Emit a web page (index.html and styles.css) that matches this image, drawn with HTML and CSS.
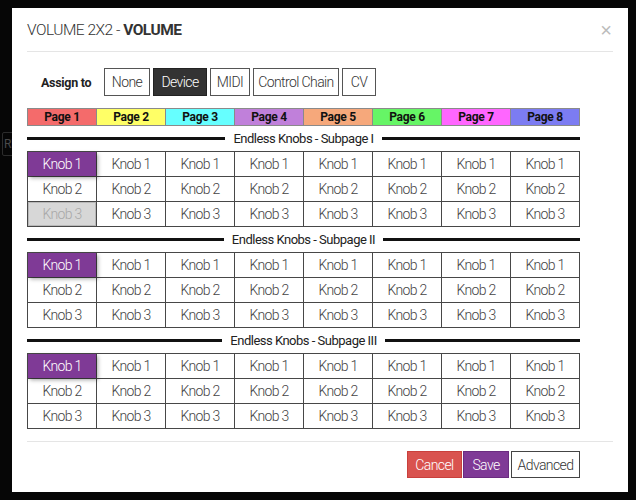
FILE: index.html
```html
<!DOCTYPE html>
<html lang="en">
<head>
  <meta charset="UTF-8">
  <title>Volume 2x2 - Volume</title>
  <link rel="stylesheet" href="styles.css">
</head>
<body>
  <div class="backdrop-btn">RE</div>
  <div class="modal">
    <div class="modal-header">
      <h4 class="modal-title">VOLUME 2X2 - <b>VOLUME</b></h4>
      <span class="close">&times;</span>
    </div>

    <div class="modal-body">
      <div class="assign">
        <span class="assign-label">Assign to</span>
        <button class="btn btn-none">None</button>
        <button class="btn btn-device selected">Device</button>
        <button class="btn btn-midi">MIDI</button>
        <button class="btn btn-cc">Control Chain</button>
        <button class="btn btn-cv">CV</button>
      </div>

      <div class="pages">
        <div class="page p1">Page 1</div>
        <div class="page p2">Page 2</div>
        <div class="page p3">Page 3</div>
        <div class="page p4">Page 4</div>
        <div class="page p5">Page 5</div>
        <div class="page p6">Page 6</div>
        <div class="page p7">Page 7</div>
        <div class="page p8">Page 8</div>
      </div>

      <div class="subpage-title"><span>Endless Knobs - Subpage I</span></div>
      <div class="knobs">
        <div class="knob active">Knob 1</div><div class="knob">Knob 1</div><div class="knob">Knob 1</div><div class="knob">Knob 1</div><div class="knob">Knob 1</div><div class="knob">Knob 1</div><div class="knob">Knob 1</div><div class="knob">Knob 1</div>
        <div class="knob">Knob 2</div><div class="knob">Knob 2</div><div class="knob">Knob 2</div><div class="knob">Knob 2</div><div class="knob">Knob 2</div><div class="knob">Knob 2</div><div class="knob">Knob 2</div><div class="knob">Knob 2</div>
        <div class="knob disabled">Knob 3</div><div class="knob">Knob 3</div><div class="knob">Knob 3</div><div class="knob">Knob 3</div><div class="knob">Knob 3</div><div class="knob">Knob 3</div><div class="knob">Knob 3</div><div class="knob">Knob 3</div>
      </div>

      <div class="subpage-title"><span>Endless Knobs - Subpage II</span></div>
      <div class="knobs">
        <div class="knob active">Knob 1</div><div class="knob">Knob 1</div><div class="knob">Knob 1</div><div class="knob">Knob 1</div><div class="knob">Knob 1</div><div class="knob">Knob 1</div><div class="knob">Knob 1</div><div class="knob">Knob 1</div>
        <div class="knob">Knob 2</div><div class="knob">Knob 2</div><div class="knob">Knob 2</div><div class="knob">Knob 2</div><div class="knob">Knob 2</div><div class="knob">Knob 2</div><div class="knob">Knob 2</div><div class="knob">Knob 2</div>
        <div class="knob">Knob 3</div><div class="knob">Knob 3</div><div class="knob">Knob 3</div><div class="knob">Knob 3</div><div class="knob">Knob 3</div><div class="knob">Knob 3</div><div class="knob">Knob 3</div><div class="knob">Knob 3</div>
      </div>

      <div class="subpage-title"><span>Endless Knobs - Subpage III</span></div>
      <div class="knobs">
        <div class="knob active">Knob 1</div><div class="knob">Knob 1</div><div class="knob">Knob 1</div><div class="knob">Knob 1</div><div class="knob">Knob 1</div><div class="knob">Knob 1</div><div class="knob">Knob 1</div><div class="knob">Knob 1</div>
        <div class="knob">Knob 2</div><div class="knob">Knob 2</div><div class="knob">Knob 2</div><div class="knob">Knob 2</div><div class="knob">Knob 2</div><div class="knob">Knob 2</div><div class="knob">Knob 2</div><div class="knob">Knob 2</div>
        <div class="knob">Knob 3</div><div class="knob">Knob 3</div><div class="knob">Knob 3</div><div class="knob">Knob 3</div><div class="knob">Knob 3</div><div class="knob">Knob 3</div><div class="knob">Knob 3</div><div class="knob">Knob 3</div>
      </div>
    </div>

    <div class="modal-footer">
      <div class="footer-buttons">
        <button class="btn btn-cancel">Cancel</button>
        <button class="btn btn-save">Save</button>
        <button class="btn btn-advanced">Advanced</button>
      </div>
    </div>
  </div>
</body>
</html>
```

FILE: styles.css
```css
body {
  margin: 0;
  background-color: #060606;
  font-family: Roboto, "Liberation Sans", sans-serif;
  font-weight: 300;
  color: #333;
  overflow: hidden;
}
.backdrop-btn {
  position: absolute;
  left: 2px;
  top: 132px;
  width: 24px;
  height: 24px;
  border: 1px solid #2c2c2c;
  border-radius: 2px;
  color: #4a4a4a;
  font-size: 12px;
  font-weight: 400;
  letter-spacing: -0.5px;
  line-height: 22px;
  padding-left: 1px;
  box-sizing: border-box;
}
.modal {
  position: relative;
  width: 616px;
  height: 484px;
  margin: 8px 0 0 12px;
  background-color: #fff;
  display: flex;
  flex-direction: column;
}
.modal-header {
  margin: 0 15px;
  padding: 12px 0 11px;
  border-bottom: 1px solid #e5e5e5;
  display: flex;
  justify-content: space-between;
  align-items: center;
}
.modal-title {
  margin: 0;
  font-size: 15.5px;
  line-height: 20px;
  font-weight: 300;
  letter-spacing: -0.5px;
  color: #333;
}
.modal-title b {
  font-weight: bold;
}
.close {
  font-family: "Liberation Sans", Arial, sans-serif;
  font-size: 20px;
  line-height: 20px;
  color: #bbb;
  margin-right: 1px;
}
.modal-body {
  margin: 0 15px;
  padding-top: 16px;
}
.assign {
  display: flex;
  align-items: center;
  height: 28px;
}
.assign-label {
  flex: 0 0 63px;
  margin-left: 14px;
  font-weight: bold;
  font-size: 12.5px;
  letter-spacing: -0.3px;
  color: #222;
}
.btn {
  font-family: inherit;
  font-weight: 300;
  font-size: 14px;
  letter-spacing: -0.6px;
  height: 28px;
  padding: 0;
  margin-right: 3px;
  background-color: #fff;
  color: #333;
  border: 1px solid #555;
  border-radius: 0;
  text-align: center;
}
.btn-none { width: 46px; }
.btn-device { width: 54px; }
.btn-midi { width: 40px; }
.btn-cc { width: 86px; }
.btn-cv { width: 34px; }
.btn.selected {
  background-color: #333;
  color: #fff;
  border-color: #222;
}
.pages {
  display: grid;
  grid-template-columns: repeat(8, 68px);
  grid-template-rows: 16px;
  gap: 1px;
  padding: 1px;
  width: max-content;
  margin-top: 12px;
  background-color: #8a8a8a;
}
.page {
  font-weight: bold;
  font-size: 12px;
  letter-spacing: -0.3px;
  line-height: 16px;
  text-align: center;
  color: #111;
}
.p1 { background-color: #f46b6b; }
.p2 { background-color: #ffff66; }
.p3 { background-color: #66ffff; }
.p4 { background-color: #c080da; }
.p5 { background-color: #f6a87b; }
.p6 { background-color: #66f566; }
.p7 { background-color: #ff66ff; }
.p8 { background-color: #7c7cf2; }
.subpage-title {
  display: flex;
  align-items: center;
  width: 553px;
  height: 25px;
  font-size: 13px;
  font-weight: 400;
  letter-spacing: -0.5px;
  color: #222;
}
.subpage-title::before,
.subpage-title::after {
  content: "";
  flex: 1;
  height: 3px;
  background-color: #111;
}
.subpage-title span {
  padding: 0 8px;
}
.knobs {
  display: grid;
  grid-template-columns: repeat(8, 68px);
  grid-auto-rows: 24px;
  gap: 1px;
  padding: 1px;
  width: max-content;
  background-color: #474747;
}
.knob {
  background-color: #fff;
  text-align: center;
  font-size: 14px;
  letter-spacing: -0.7px;
  line-height: 24px;
  color: #444;
}
.knob.active {
  position: relative;
  z-index: 1;
  background-color: #7f3a96;
  color: #fff;
  box-shadow: 2px 2px 4px rgba(0,0,0,0.35);
}
.knob.disabled {
  background-color: #d7d7d7;
  color: #a8a8a8;
  box-shadow: inset 0 0 0 1px #b8b8b8;
}
.modal-footer {
  margin: 12px 15px 0;
  border-top: 1px solid #e5e5e5;
  padding-top: 9px;
}
.footer-buttons {
  width: 553px;
  display: flex;
  justify-content: flex-end;
}
.footer-buttons .btn {
  height: 27px;
  margin: 0;
}
.btn-cancel {
  width: 55px;
  background-color: #d9534f;
  border-color: #c9403c;
  color: #fff;
}
.footer-buttons .btn-save {
  width: 46px;
  margin-left: 1px;
  background-color: #7f3a96;
  border-color: #6b2c80;
  color: #fff;
}
.footer-buttons .btn-advanced {
  width: 69px;
  margin-left: 2px;
  border-color: #444;
}
```
